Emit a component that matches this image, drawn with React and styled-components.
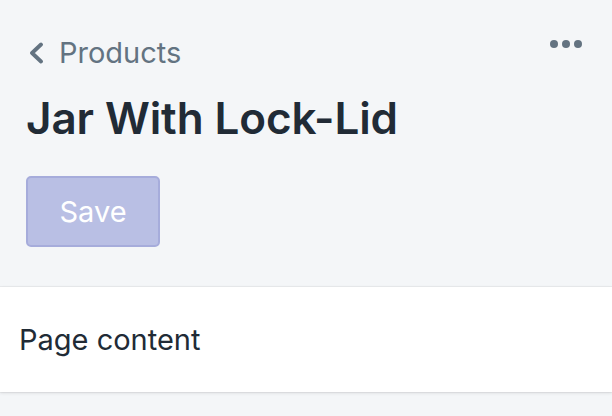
import React from 'react';
import styled, { createGlobalStyle } from 'styled-components';

const GlobalStyle = createGlobalStyle`
  html, body {
    margin: 0;
    padding: 0;
    background: #f4f6f8;
    font-family: Inter, "Noto Sans", sans-serif;
    -webkit-font-smoothing: antialiased;
  }
`

const Page = styled.div`
  width: 612px;
  min-height: 416px;
  background: #f4f6f8;
`

const Header = styled.header`
  padding: 33px 26px 40px 26px;
  display: flex;
  flex-direction: column;
`

const TopRow = styled.div`
  display: flex;
  align-items: center;
  justify-content: space-between;
  height: 40px;
`

const Breadcrumb = styled.a`
  display: flex;
  align-items: center;
  gap: 15px;
  padding-left: 2px;
  color: #637381;
  font-size: 29px;
  line-height: 40px;
  text-decoration: none;
  cursor: pointer;
`

const MoreButton = styled.button`
  align-self: flex-start;
  display: flex;
  gap: 4px;
  background: none;
  border: none;
  padding: 0;
  margin: 7px 4px 0 0;
  cursor: pointer;
`

const Dot = styled.span`
  width: 8px;
  height: 8px;
  border-radius: 50%;
  background: #637381;
`

const Title = styled.h1`
  margin: 19px 0 0 0;
  font-size: 44px;
  line-height: 52px;
  font-weight: 600;
  color: #212b36;
  letter-spacing: -0.1px;
`

const SaveButton = styled.button`
  margin-top: 32px;
  width: 134px;
  height: 71px;
  border-radius: 5px;
  border: 2px solid #a6acdb;
  background: #b9bfe4;
  color: #fff;
  font-family: inherit;
  font-size: 29px;
  cursor: default;
`

const Card = styled.section`
  background: #fff;
  height: 105px;
  display: flex;
  align-items: center;
  padding: 0 19px;
  box-shadow: 0 0 0 1px rgba(63, 63, 68, 0.05), 0 1px 3px 0 rgba(63, 63, 68, 0.15);
  font-size: 29px;
  color: #212b36;
`

const ChevronLeft = () => (
  <svg width="16" height="22" viewBox="0 0 16 22">
    <path d="M13 2.5 L4 11 L13 19.5" fill="none" stroke="#637381" strokeWidth="3.8" strokeLinecap="round" strokeLinejoin="round" />
  </svg>
);

export default function App() {
  return (
    <Page>
      <GlobalStyle />
      <Header>
        <TopRow>
          <Breadcrumb>
            <ChevronLeft />
            Products
          </Breadcrumb>
          <MoreButton aria-label="More actions">
            <Dot />
            <Dot />
            <Dot />
          </MoreButton>
        </TopRow>
        <Title>Jar With Lock-Lid</Title>
        <div>
          <SaveButton disabled>Save</SaveButton>
        </div>
      </Header>
      <Card>Page content</Card>
    </Page>
  );
}
